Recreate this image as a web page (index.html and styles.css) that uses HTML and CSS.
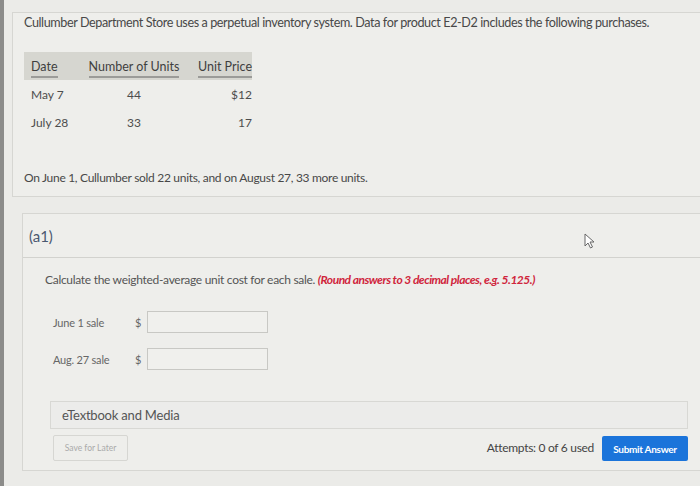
FILE: index.html
```
<!DOCTYPE html>
<html>
<head>
<meta charset="utf-8">
<link rel="stylesheet" href="styles.css">
</head>
<body>
<div class="strip"></div>
<div class="main">
  <div class="panel intro">
    <p class="lead">Cullumber Department Store uses a perpetual inventory system. Data for product E2-D2 includes the following purchases.</p>
    <div class="table">
      <div class="row head">
        <div class="c1"><span>Date</span></div>
        <div class="c2"><span>Number of Units</span></div>
        <div class="c3"><span>Unit Price</span></div>
      </div>
      <div class="row">
        <div class="c1">May 7</div>
        <div class="c2">44</div>
        <div class="c3">$12</div>
      </div>
      <div class="row">
        <div class="c1">July 28</div>
        <div class="c2">33</div>
        <div class="c3">17</div>
      </div>
    </div>
    <p class="sold">On June 1, Cullumber sold 22 units, and on August 27, 33 more units.</p>
  </div>
  <div class="panel part">
    <div class="part-head">(a1)</div>
    <div class="part-body">
      <p class="q">Calculate the weighted-average unit cost for each sale. <em>(Round answers to 3 decimal places, e.g. 5.125.)</em></p>
      <div class="field"><span class="lbl">June 1 sale</span><span class="dol">$</span><span class="inp"></span></div>
      <div class="field"><span class="lbl">Aug. 27 sale</span><span class="dol">$</span><span class="inp"></span></div>
      <div class="media">eTextbook and Media</div>
      <div class="actions">
        <span class="save">Save for Later</span>
        <span class="attempts">Attempts: 0 of 6 used</span>
        <span class="submit">Submit Answer</span>
      </div>
    </div>
  </div>
</div>
<svg class="cursor" width="12" height="16" viewBox="0 0 12 16"><path d="M1 1 L1 13 L4 10 L6.5 15 L8.5 14 L6 9 L10 9 Z" fill="#fff" stroke="#666" stroke-width="1"/></svg>
</body>
</html>
```
FILE: styles.css
```
html, body { margin: 0; padding: 0; }
body {
  width: 700px; height: 486px; overflow: hidden;
  background: #ebebe8;
  display: flex;
  font-family: Lato, "Liberation Sans", sans-serif;
  color: #4d4d4d;
  position: relative;
}
.strip { width: 4px; background: #8c8c8a; flex: none; }
.main { flex: 1; padding: 12px 0 0 8px; }
.panel { border: 1px solid #d6d6d2; border-right: none; background: #eeeeeb; }
.intro { height: 185px; padding: 0 0 0 11px; box-sizing: border-box; overflow: hidden; }
.lead { margin: 2px 0 0; font-size: 12.6px; letter-spacing: -0.4px; line-height: 16px; color: #484848; }
.table { margin-top: 21px; width: 228px; font-size: 12px; }
.row { display: flex; height: 28px; align-items: center; }
.row.head { background: #d6d6d0; height: 28px; font-size: 12.5px; }
.c1 { width: 55px; padding-left: 7px; }
.c2 { width: 96px; text-align: center; }
.c3 { flex: 1; text-align: right; }
.head span { border-bottom: 2px solid #9b9b98; padding-bottom: 2px; color: #3f3f3f; }
.sold { margin: 34px 0 0; font-size: 12px; letter-spacing: -0.3px; color: #484848; }
.part { margin: 16px 0 0 10px; height: 258px; box-sizing: border-box; }
.part-head { height: 43px; border-bottom: 1px solid #d2d2ce; font-size: 15px; color: #4a5870; display: flex; align-items: center; padding-left: 6px; }
.part-body { padding: 14px 12px 0 22px; }
.q { margin: 0; font-size: 12px; letter-spacing: -0.3px; color: #555; }
.q em { color: #d0253c; font-weight: bold; letter-spacing: -0.5px; }
.field { display: flex; align-items: center; height: 22px; margin-left: 8px; font-size: 11px; color: #666; }
.field:first-of-type { margin-top: 24px; }
.field + .field { margin-top: 15px; }
.lbl { width: 82px; letter-spacing: -0.2px; }
.dol { width: 12px; }
.inp { width: 119px; height: 20px; border: 1px solid #c8c8c4; background: #f0f0ed; }
.media { margin: 31px 0 0 5px; height: 26px; border: 1px solid #d8d8d4; background: #ececea; display: flex; align-items: center; padding-left: 11px; font-size: 13px; color: #555; letter-spacing: -0.2px; }
.actions { display: flex; align-items: center; margin: 5px 0 0 8px; }
.save { width: 73px; height: 24px; border: 1px solid #d6d6d2; border-radius: 2px; font-size: 8.5px; color: #aaa; display: flex; align-items: center; justify-content: center; }
.attempts { margin-left: auto; font-size: 12px; color: #444; letter-spacing: -0.3px; margin-right: 8px; }
.submit { width: 86px; height: 25px; background: #1b74da; border-radius: 2px; color: #fff; font-size: 10px; font-weight: bold; display: flex; align-items: center; justify-content: center; letter-spacing: -0.3px; margin-top: 2px; }
.cursor { position: absolute; left: 584px; top: 233px; }
```
